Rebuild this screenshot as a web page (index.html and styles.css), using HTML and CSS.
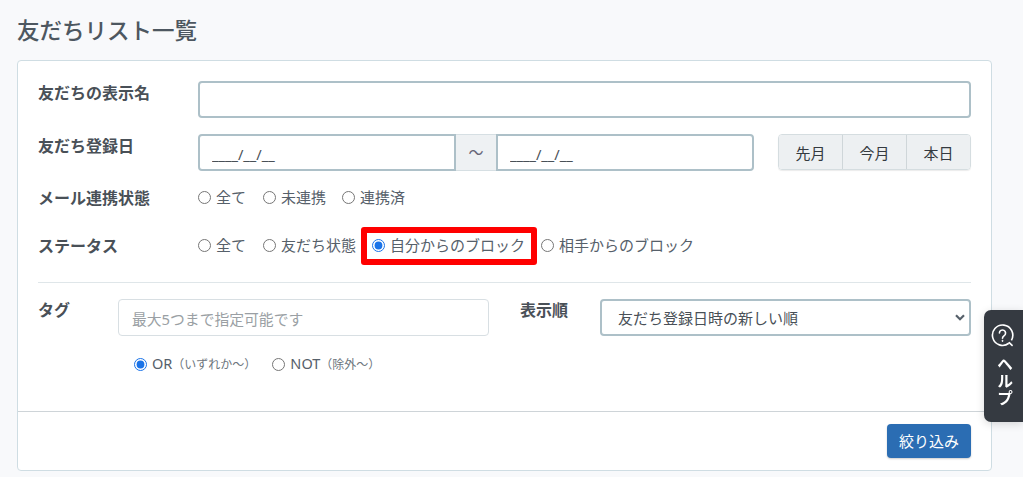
FILE: index.html
```html
<!DOCTYPE html>
<html lang="ja">
<head>
<meta charset="utf-8">
<title>友だちリスト一覧</title>
<link rel="stylesheet" href="styles.css">
</head>
<body>
<main class="page">
  <h1 class="title">友だちリスト一覧</h1>
  <section class="card">
    <div class="card-body">
      <div class="row row-name">
        <div class="label">友だちの表示名</div>
        <input class="field" type="text">
      </div>
      <div class="row row-date">
        <div class="label">友だち登録日</div>
        <div class="date-group">
          <input class="field date-from" type="text" value="____/__/__">
          <span class="tilde">〜</span>
          <input class="field date-to" type="text" value="____/__/__">
        </div>
        <div class="btn-group">
          <button class="btn-light" type="button">先月</button>
          <button class="btn-light" type="button">今月</button>
          <button class="btn-light" type="button">本日</button>
        </div>
      </div>
      <div class="row row-mail">
        <div class="label">メール連携状態</div>
        <div class="radios">
          <label class="radio"><input type="radio" name="mail"><span>全て</span></label>
          <label class="radio"><input type="radio" name="mail"><span>未連携</span></label>
          <label class="radio"><input type="radio" name="mail"><span>連携済</span></label>
        </div>
      </div>
      <div class="row row-status">
        <div class="label">ステータス</div>
        <div class="radios">
          <label class="radio"><input type="radio" name="st"><span>全て</span></label>
          <label class="radio"><input type="radio" name="st"><span>友だち状態</span></label>
          <label class="radio highlighted"><input type="radio" name="st" checked><span>自分からのブロック</span></label>
          <label class="radio"><input type="radio" name="st"><span>相手からのブロック</span></label>
        </div>
      </div>
      <hr class="rule">
      <div class="row-filter">
        <div class="tag-col">
          <div class="tag-top">
            <div class="label label-tag">タグ</div>
            <input class="tag-input" type="text" placeholder="最大5つまで指定可能です">
          </div>
          <div class="tag-modes">
            <label class="radio mode"><input type="radio" name="mode" checked><span>OR<small>（いずれか〜）</small></span></label>
            <label class="radio mode"><input type="radio" name="mode"><span>NOT<small>（除外〜）</small></span></label>
          </div>
        </div>
        <div class="sort-col">
          <div class="label label-sort">表示順</div>
          <div class="select-box">
            <span>友だち登録日時の新しい順</span>
            <svg class="chev" width="10" height="7" viewBox="0 0 10 7"><path d="M1 1.2 5 5.2l4-4" fill="none" stroke="#56606a" stroke-width="2.2"/></svg>
          </div>
        </div>
      </div>
    </div>
    <div class="card-foot">
      <button class="btn-primary" type="button">絞り込み</button>
    </div>
  </section>
</main>
<aside class="help">
  <svg class="help-icon" width="23" height="23" viewBox="0 0 24 24" fill="none" stroke="#fff" stroke-width="1.7">
    <path d="M18.6 20.1A10.6 10.6 0 1 1 21.3 17"/>
    <path d="M19 19.5l3 2.8" stroke-linecap="round"/>
    <path d="M8.8 9.4a3.2 3.2 0 1 1 5 2.7c-1.1.8-1.8 1.3-1.8 2.7" stroke-linecap="round"/>
    <circle cx="12" cy="17.6" r=".6" fill="#fff" stroke-width="1"/>
  </svg>
  <span class="help-text">ヘルプ</span>
</aside>
</body>
</html>
```
FILE: styles.css
```css
* { box-sizing: border-box; }
html, body { margin: 0; height: 477px; overflow: hidden; }
body {
  background: #f8f9fb;
  color: #495057;
  font-family: "Noto Sans", "Noto Sans CJK JP", sans-serif;
  font-size: 15px;
}
.page { padding: 15px 31px 0 17px; }
.title {
  margin: 0 0 14px;
  font-size: 22.5px;
  line-height: 31px;
  font-weight: 500;
  color: #4d5760;
}
.card {
  height: 411px;
  background: #fff;
  border: 1px solid #cfdde3;
  border-radius: 4px;
  display: flex;
  flex-direction: column;
}
.card-body { flex: 0 0 351px; padding: 20px 20px 0; border-bottom: 1px solid #ced4d8; }
.row { display: flex; align-items: flex-start; }
.label { flex: 0 0 160px; font-weight: 700; color: #495057; line-height: 21px; font-size: 16px; }
.row-name { height: 53px; }
.row-name .label { padding-top: 2px; }
.field {
  height: 37px;
  border: 2px solid #adc0c8;
  border-radius: 4px;
  background: #fff;
  font: inherit;
  color: #495057;
  outline: none;
}
.row-name .field { flex: 1; }
.row-date { height: 53px; }
.row-date .label { padding-top: 2px; }
.date-group { display: flex; width: 556px; }
.date-from { width: 258px; padding: 2px 12px 0; border-radius: 4px 0 0 4px; font-size: 14.6px; }
.date-to { width: 258px; padding: 2px 12px 0; border-radius: 0 4px 4px 0; font-size: 14.6px; }
.tilde {
  width: 40px;
  height: 37px;
  border-top: 1px solid #d6dfe3;
  border-bottom: 1px solid #d6dfe3;
  background: #eef1f3;
  text-align: center;
  line-height: 35px;
  font-size: 15px;
  color: #667;
}
.btn-group {
  display: flex;
  margin-left: auto;
  height: 36px;
  width: 193px;
  border: 1px solid #d5dde0;
  border-radius: 4px;
  overflow: hidden;
  box-shadow: 0 1px 1px rgba(0, 0, 0, .08);
}
.btn-light {
  flex: 1;
  border: 0;
  border-right: 1px solid #cfd6d9;
  background: #edf0f2;
  font: inherit;
  color: #343a40;
  padding: 0;
}
.btn-light:last-child { border-right: 0; }
.radios { display: flex; align-items: center; }
.radio { display: flex; align-items: center; color: #56606a; line-height: 21px; margin-right: 16px; }
.radio:first-child { margin-right: 17px; }
.radio input {
  margin: 0 5px 0 0;
  width: 13px;
  height: 13px;
  accent-color: #1a73e8;
  flex: none;
}
.row-mail { height: 48px; }
.row-mail .label, .row-status .label { padding-top: 1px; }
.row-status { height: 47px; }
.highlighted { position: relative; }
.highlighted::before {
  content: "";
  position: absolute;
  left: -11px;
  right: -12px;
  top: -8px;
  bottom: -9px;
  border: 6px solid #f00;
  border-radius: 3px;
}
.rule { margin: 0; border: 0; border-top: 1px solid #dfe6e9; }
.row-filter { display: flex; padding-top: 16px; }
.tag-col { flex: 0 0 451px; }
.tag-top { display: flex; }
.label-tag { flex: 0 0 80px; padding-top: 1px; }
.tag-input {
  width: 371px;
  height: 37px;
  border: 1px solid #d8dfe3;
  border-radius: 4px;
  padding: 2px 13px 0;
  font: inherit;
  font-size: 14.8px;
  outline: none;
}
.tag-input::placeholder { color: #9a9fa4; opacity: 1; }
.tag-modes { display: flex; padding: 17px 0 0 96px; }
.radio.mode { margin-right: 16px; }
.mode span { font-size: 14.5px; }
.mode small { font-size: 12px; color: #6c757d; }
.sort-col { flex: 1; display: flex; padding-left: 31px; }
.label-sort { flex: 0 0 80px; padding-top: 1px; }
.select-box {
  flex: 1;
  height: 37px;
  border: 2px solid #adc0c8;
  border-radius: 4px;
  padding: 0 4px 0 16px;
  display: flex;
  align-items: center;
  justify-content: space-between;
  color: #495057;
}
.chev { flex: none; }
.card-foot { flex: 1; display: flex; justify-content: flex-end; padding: 12px 20px 0; }
.btn-primary {
  width: 84px;
  height: 34px;
  border: 0;
  border-radius: 4px;
  background: #2b6db3;
  color: #fff;
  font: inherit;
  padding: 0 0 2px;
  box-shadow: 0 1px 2px rgba(0, 0, 0, .2);
}
.help {
  position: fixed;
  right: 0;
  top: 310px;
  width: 39px;
  height: 112px;
  background: #353a41;
  border-radius: 7px 0 0 7px;
  box-shadow: 0 2px 8px rgba(0, 0, 0, .15);
  display: flex;
  flex-direction: column;
  align-items: center;
  padding-top: 14px;
  color: #fff;
}
.help-icon { margin: 0 2px 9px 0; flex: none; }
.help-text { writing-mode: vertical-rl; font-weight: 700; font-size: 16px; line-height: 19px; letter-spacing: 1px; }
```
